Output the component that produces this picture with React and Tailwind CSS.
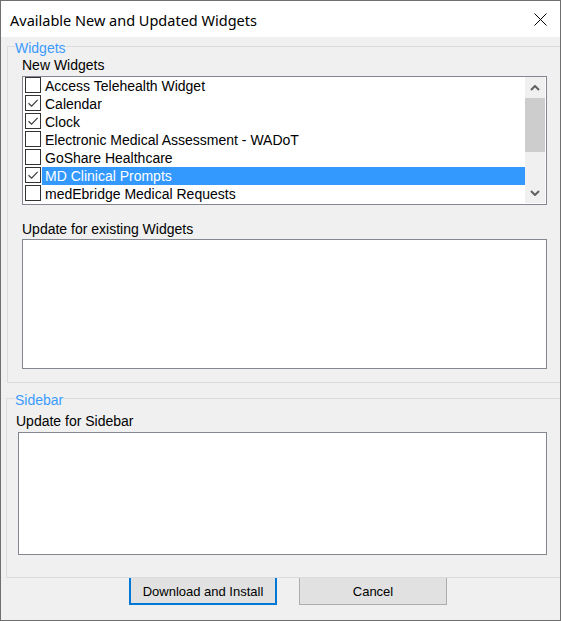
import { useState } from "react";

const newWidgets = [
  { name: "Access Telehealth Widget", checked: false },
  { name: "Calendar", checked: true },
  { name: "Clock", checked: true },
  { name: "Electronic Medical Assessment - WADoT", checked: false },
  { name: "GoShare Healthcare", checked: false },
  { name: "MD Clinical Prompts", checked: true },
  { name: "medEbridge Medical Requests", checked: false },
];

// ─── Small pieces ───────────────────────────────────────────────────────────
function CheckBox({ checked }) {
  return (
    <div className="w-[16px] h-[16px] shrink-0 border border-[#333333] bg-white flex items-center justify-center">
      {checked && (
        <svg width="12" height="12" viewBox="0 0 12 12" fill="none" stroke="#3a3a3a" strokeWidth="1.2">
          <path d="M1.5 6.2 L4.6 9.2 L10.6 2.8" />
        </svg>
      )}
    </div>
  );
}

function Chevron({ down }) {
  return (
    <svg width="10" height="6" viewBox="0 0 10 6" fill="none" stroke="#606060" strokeWidth="2">
      {down ? <path d="M1 1 L5 5 L9 1" /> : <path d="M1 5 L5 1 L9 5" />}
    </svg>
  );
}

export default function App() {
  const [selected, setSelected] = useState(5);

  return (
    <div className="w-[561px] h-[621px] border border-[#6f6f6f] bg-[#f0f0f0] flex flex-col font-['Liberation_Sans',Arial,sans-serif] text-[14px] text-black overflow-hidden">
      {/* Title bar */}
      <div className="h-[36px] shrink-0 bg-white flex items-center justify-between pl-[9px] pr-[13px]">
        <span className="font-['Noto_Sans',sans-serif] text-[14.5px] leading-[20px] pt-[1px] text-black">
          Available New and Updated Widgets
        </span>
        <svg width="13" height="13" viewBox="0 0 13 13" fill="none" stroke="#000" strokeWidth="1">
          <path d="M0.5 0.5 L12.5 12.5 M12.5 0.5 L0.5 12.5" />
        </svg>
      </div>

      {/* Widgets group */}
      <fieldset className="ml-[6px] border-l border-t border-b border-[#dcdcdc] p-0 m-0 pb-[13px] min-w-0">
        <legend className="ml-[7px] pt-[3px] leading-[16px] text-[#3c9bff]">Widgets</legend>
        <div className="pl-[14px]">
          <div className="mt-[1px] leading-[16px]">New Widgets</div>

          <div className="mt-[3px] w-[525px] h-[129px] border border-[#828790] bg-white flex pb-[1px] pr-[1px]">
            <div className="flex-1 flex flex-col">
              {newWidgets.map((w, i) => (
                <div
                  key={w.name}
                  onClick={() => setSelected(i)}
                  className="h-[18px] flex items-start pl-[2px]"
                >
                  <CheckBox checked={w.checked} />
                  <div
                    className={`ml-[1px] flex-1 h-[18px] pl-[3px] leading-[18px] whitespace-nowrap ${
                      selected === i ? "bg-[#3399ff] text-white" : "text-black"
                    }`}
                  >
                    {w.name}
                  </div>
                </div>
              ))}
            </div>
            {/* scrollbar */}
            <div className="w-[20px] bg-[#f0f0f0] flex flex-col">
              <div className="h-[21px] flex items-center justify-center">
                <Chevron />
              </div>
              <div className="h-[54px] bg-[#cdcdcd]" />
              <div className="flex-1 flex items-end justify-center pb-[7px]">
                <Chevron down />
              </div>
            </div>
          </div>

          <div className="mt-[16px] leading-[16px]">Update for existing Widgets</div>
          <div className="mt-[2px] w-[525px] h-[130px] border border-[#828790] bg-white" />
        </div>
      </fieldset>

      {/* Sidebar group */}
      <fieldset className="mt-[6px] ml-[5px] border-l border-t border-b border-[#dcdcdc] p-0 pb-[22px] min-w-0">
        <legend className="ml-[8px] pt-[3px] leading-[16px] text-[#3c9bff]">Sidebar</legend>
        <div className="mt-[5px] pl-[9px] leading-[16px]">Update for Sidebar</div>
        <div className="mt-[3px] ml-[11px] w-[529px] h-[123px] border border-[#828790] bg-white" />
      </fieldset>

      {/* Buttons — top edge sits under the group's bottom line */}
      <div className="flex gap-[22px] pl-[128px]">
        <button className="w-[148px] h-[27px] pt-[2px] border-2 border-t-0 border-[#0078d7] bg-[#e1e1e1] text-[13px] text-black flex items-center justify-center">
          Download and Install
        </button>
        <button className="w-[148px] h-[27px] pt-[1px] border border-t-0 border-[#adadad] bg-[#e1e1e1] text-[13px] text-black flex items-center justify-center">
          Cancel
        </button>
      </div>
    </div>
  );
}
